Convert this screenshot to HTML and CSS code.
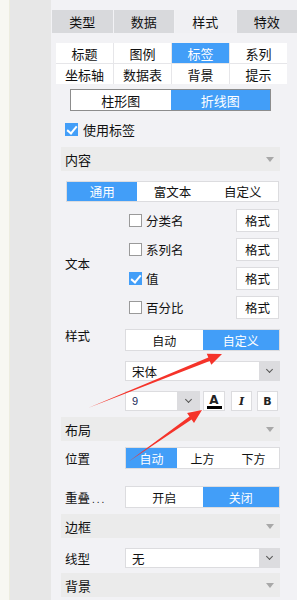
FILE: index.html
```html
<!DOCTYPE html>
<html lang="zh">
<head>
  <meta charset="UTF-8" />
  <title>标签样式</title>
  <link rel="stylesheet" href="styles.css">
</head>
<body>
  <div class="page">
    <div class="edge"></div>
    <div class="sidebar"></div>

    <div class="panel">
      <div class="tabs">
        <div class="tab">类型</div>
        <div class="tab">数据</div>
        <div class="tab on">样式</div>
        <div class="tab">特效</div>
      </div>

      <div class="subtabs">
        <div class="subtab">标题</div>
        <div class="subtab">图例</div>
        <div class="subtab on">标签</div>
        <div class="subtab">系列</div>
        <div class="subtab">坐标轴</div>
        <div class="subtab">数据表</div>
        <div class="subtab">背景</div>
        <div class="subtab">提示</div>
      </div>

      <div class="seg seg-chart">
        <div class="seg-item">柱形图</div>
        <div class="seg-item on">折线图</div>
      </div>

      <div class="check-row top-check">
        <span class="box checked"></span>
        <span>使用标签</span>
      </div>

      <div class="section">
        <div class="section-head">内容<span class="caret"></span></div>

        <div class="seg seg-wide">
          <div class="seg-item on">通用</div>
          <div class="seg-item">富文本</div>
          <div class="seg-item">自定义</div>
        </div>

        <div class="row text-block">
          <div class="label">文本</div>
          <div class="control options">
            <div class="option">
              <span class="box"></span><span class="opt-name">分类名</span>
              <button class="fmt-btn">格式</button>
            </div>
            <div class="option">
              <span class="box"></span><span class="opt-name">系列名</span>
              <button class="fmt-btn">格式</button>
            </div>
            <div class="option">
              <span class="box checked"></span><span class="opt-name">值</span>
              <button class="fmt-btn">格式</button>
            </div>
            <div class="option">
              <span class="box"></span><span class="opt-name">百分比</span>
              <button class="fmt-btn">格式</button>
            </div>
          </div>
        </div>

        <div class="row style-row">
          <div class="label label-top">样式</div>
          <div class="control">
            <div class="seg">
              <div class="seg-item">自动</div>
              <div class="seg-item on">自定义</div>
            </div>
            <div class="select font-select">
              <span class="select-text">宋体</span>
              <span class="select-arrow"><span class="chev"></span></span>
            </div>
            <div class="font-tools">
              <div class="select size-select">
                <span class="select-text size-text">9</span>
                <span class="select-arrow"><span class="chev"></span></span>
              </div>
              <button class="tool-btn color-btn"><span class="glyph-a">A</span><span class="color-bar"></span></button>
              <button class="tool-btn italic-btn">I</button>
              <button class="tool-btn bold-btn">B</button>
            </div>
          </div>
        </div>

        <div class="section-head layout-head">布局<span class="caret"></span></div>

        <div class="row pos-row">
          <div class="label">位置</div>
          <div class="control">
            <div class="seg">
              <div class="seg-item on">自动</div>
              <div class="seg-item">上方</div>
              <div class="seg-item">下方</div>
            </div>
          </div>
        </div>

        <div class="row overlap-row">
          <div class="label">重叠<span class="dots">...</span></div>
          <div class="control">
            <div class="seg">
              <div class="seg-item">开启</div>
              <div class="seg-item on">关闭</div>
            </div>
          </div>
        </div>

        <div class="section-head border-head">边框<span class="caret"></span></div>

        <div class="row line-row">
          <div class="label">线型</div>
          <div class="control">
            <div class="select">
              <span class="select-text">无</span>
              <span class="select-arrow"><span class="chev"></span></span>
            </div>
          </div>
        </div>

        <div class="section-head bg-head">背景<span class="caret"></span></div>
      </div>
    </div>

    <svg class="arrows" width="297" height="600" viewBox="0 0 297 600">
      <polygon fill="#f5332a" points="88,408 209.7,360.9 211.3,364.8 222,354 206.8,353.7 208.3,357.5" />
      <polygon fill="#f5332a" points="128,462 191.6,419.5 194,423 202,410 187.1,413.1 189.5,416.6" />
    </svg>
  </div>
</body>
</html>
```

FILE: styles.css
```css
* {
  box-sizing: border-box;
  margin: 0;
  padding: 0;
}

body {
  font-family: 'Liberation Sans', 'Noto Sans CJK SC', sans-serif;
  font-size: 12px;
  color: #111;
  background: #f2f2f5;
}

.page {
  position: relative;
  display: flex;
  width: 297px;
  height: 600px;
  overflow: hidden;
}

.edge {
  width: 10px;
  background: #f7f7f2;
  border-right: 1px solid #ececdf;
}

.sidebar {
  width: 41px;
  background: #e7e7e7;
}

.panel {
  width: 246px;
  padding-top: 10px;
  background: #f2f2f5;
}

.tabs {
  display: grid;
  grid-template-columns: repeat(4, 1fr);
  gap: 1px;
  margin-left: 1px;
  height: 23px;
}

.tab {
  display: flex;
  align-items: center;
  justify-content: center;
  background: #d8d9dc;
  font-size: 13px;
}

.tab.on {
  background: #f0f0f3;
}

.subtabs {
  display: grid;
  grid-template-columns: repeat(4, 1fr);
  grid-auto-rows: 20px;
  gap: 1px;
  margin: 10px 10px 0 5px;
  background: #e6e6e9;
}

.subtab {
  display: flex;
  align-items: center;
  justify-content: center;
  background: #fff;
  font-size: 13px;
}

.subtab.on {
  background: #429ef8;
  color: #fff;
}

.seg {
  display: flex;
  height: 22px;
  background: #fff;
  border: 1px solid #dcdcdf;
}

.seg-item {
  flex: 1;
  display: flex;
  align-items: center;
  justify-content: center;
  font-size: 12px;
}

.seg-item.on {
  background: #429ef8;
  color: #fff;
}

.seg-chart {
  width: 201px;
  margin: 5px 0 0 19px;
  border-color: #8c8c8c;
}

.seg-chart .seg-item {
  font-size: 13px;
}

.check-row {
  display: flex;
  align-items: center;
  gap: 5px;
  height: 22px;
  margin-top: 7px;
  padding-left: 14px;
  font-size: 13px;
}

.box {
  width: 13px;
  height: 13px;
  flex: none;
  background: #fff;
  border: 1px solid #9a9a9a;
  position: relative;
}

.box.checked {
  background: #429ef8;
  border-color: #429ef8;
}

.box.checked::after {
  content: '';
  position: absolute;
  left: 3px;
  top: 0px;
  width: 4px;
  height: 8px;
  border: solid #fff;
  border-width: 0 2px 2px 0;
  transform: rotate(40deg);
}

.section {
  margin: 7px 17px 0 10px;
}

.section-head {
  display: flex;
  align-items: center;
  justify-content: space-between;
  height: 24px;
  padding: 0 6px 0 4px;
  background: #ebebeb;
  font-size: 13px;
}

.caret {
  width: 0;
  height: 0;
  border-left: 4px solid transparent;
  border-right: 4px solid transparent;
  border-top: 5px solid #a8a8a8;
}

.seg-wide {
  height: 21px;
  margin: 10px 1px 0 5px;
}

.seg-wide .seg-item {
  font-size: 12.5px;
}

.row {
  display: flex;
  align-items: center;
}

.label {
  width: 64px;
  flex: none;
  padding-left: 4px;
  font-size: 12.5px;
}

.label-top {
  align-self: flex-start;
  margin-top: 0;
  line-height: 16px;
}

.dots {
  letter-spacing: 2px;
  margin-left: 2px;
  font-size: 10px;
}

.control {
  flex: 1;
}

.text-block {
  margin-top: 7px;
}

.options {
  display: flex;
  flex-direction: column;
  gap: 7px;
}

.option {
  display: flex;
  align-items: center;
  height: 22px;
  padding-left: 4px;
}

.opt-name {
  margin-left: 4px;
  font-size: 12.5px;
}

.fmt-btn {
  margin-left: auto;
  margin-right: 1px;
  width: 43px;
  height: 23px;
  background: #fff;
  border: 1px solid #dcdcdf;
  font-family: inherit;
  font-size: 12.5px;
  color: #111;
}

.style-row {
  margin-top: 11px;
}

.select {
  display: flex;
  height: 20px;
  background: #fff;
  border: 1px solid #dcdcdf;
}

.select-text {
  flex: 1;
  display: flex;
  align-items: center;
  padding-left: 6px;
  font-size: 12.5px;
}

.select-arrow {
  width: 20px;
  display: flex;
  align-items: center;
  justify-content: center;
  background: #dcdcdf;
}

.chev {
  width: 5px;
  height: 5px;
  border: solid #555;
  border-width: 0 1px 1px 0;
  transform: translateY(-2px) rotate(45deg);
}

.font-select {
  margin-top: 10px;
}

.font-tools {
  display: flex;
  align-items: center;
  gap: 5px;
  margin-top: 10px;
}

.size-select {
  width: 75px;
  margin-right: -2px;
}

.size-text {
  font-size: 11px;
  color: #1a2a5a;
}

.size-select .select-arrow {
  width: 22px;
}

.tool-btn {
  width: 21px;
  height: 20px;
  background: #fff;
  border: 1px solid #dcdcdf;
  font-family: 'DejaVu Sans', sans-serif;
  font-size: 11px;
  font-weight: bold;
  color: #222;
  display: flex;
  flex-direction: column;
  align-items: center;
  justify-content: center;
}

.color-btn {
  width: 22px;
  padding-top: 1px;
}

.glyph-a {
  line-height: 10px;
  font-size: 12px;
}

.color-bar {
  width: 15px;
  height: 3px;
  margin-top: 1px;
  background: #000;
}

.italic-btn {
  font-family: 'DejaVu Serif', serif;
  font-style: italic;
  margin-left: 1px;
}

.layout-head {
  margin-top: 6px;
}

.pos-row {
  margin-top: 6px;
}

.pos-row .seg {
  height: 22px;
}

.overlap-row {
  margin-top: 17px;
}

.border-head {
  margin-top: 6px;
}

.line-row {
  margin-top: 10px;
}

.bg-head {
  margin-top: 5px;
}

.arrows {
  position: absolute;
  left: 0;
  top: 0;
  pointer-events: none;
}
```
